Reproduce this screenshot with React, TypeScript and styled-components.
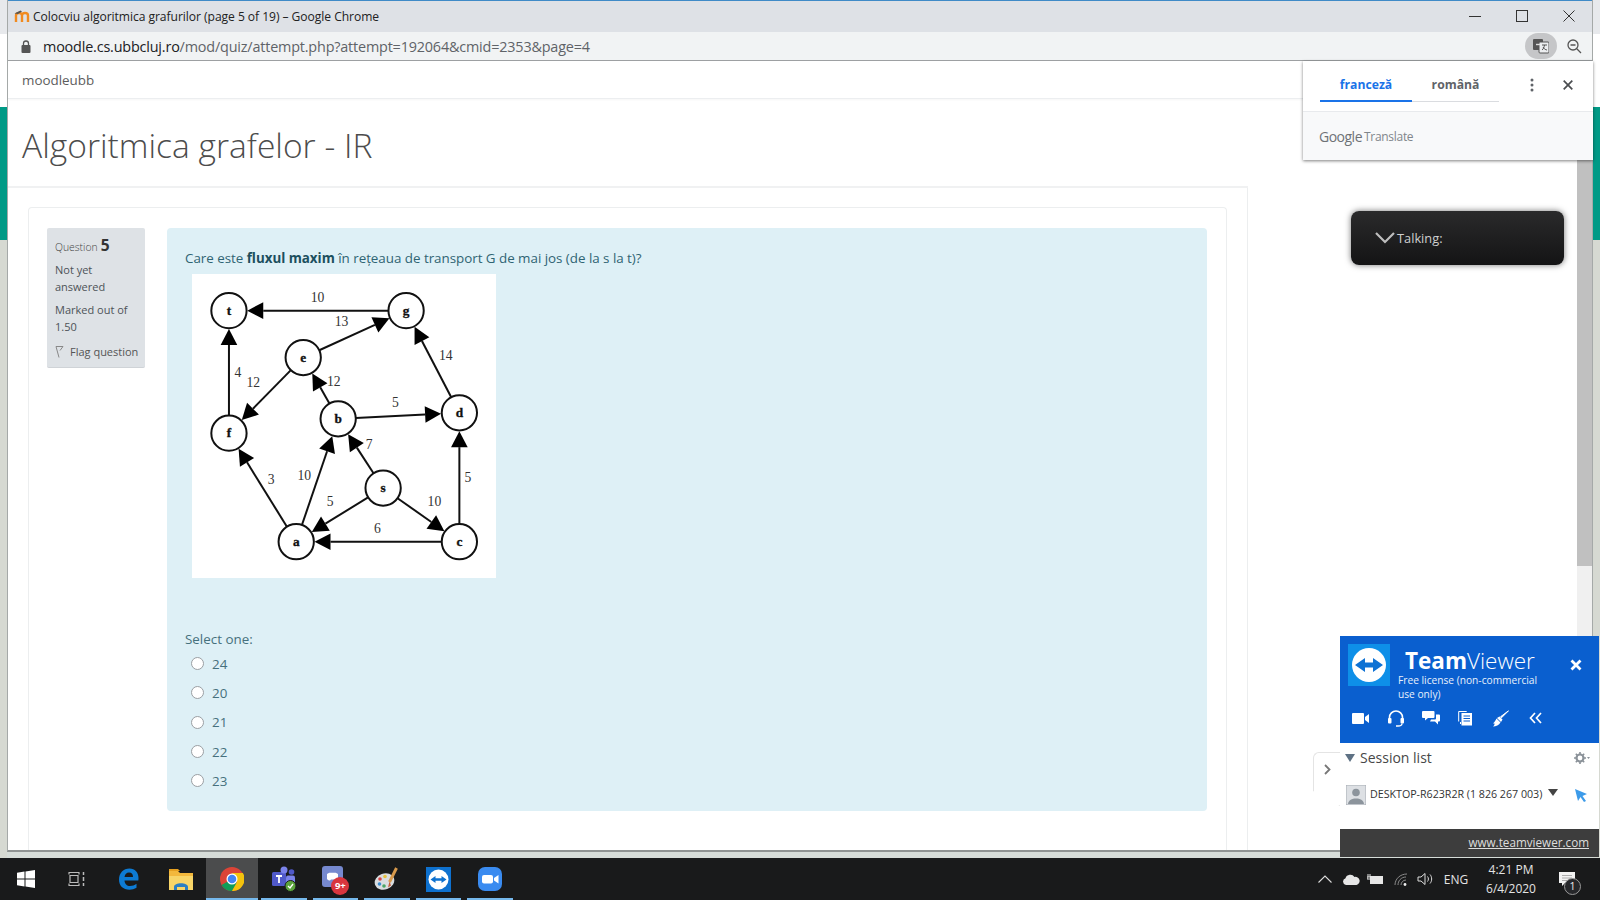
import React from "react";
import styled, { createGlobalStyle } from "styled-components";

const Global = createGlobalStyle`
  html, body { margin: 0; padding: 0; background: #fff; overflow: hidden; }
  * { box-sizing: border-box; }
`;

const UI = `"Open Sans", "Noto Sans", "Liberation Sans", sans-serif`;

const Desktop = styled.div`
  position: relative;
  width: 1600px;
  height: 900px;
  overflow: hidden;
  display: flex;
  flex-direction: column;
  font-family: ${UI};
`;
const DeskArea = styled.div`
  flex: 1;
  min-height: 0;
  display: flex;
  background: #d6dcd8;
`;
const SideStrip = styled.div`
  width: 7px;
  display: flex;
  flex-direction: column;
`;
const Band = styled.div<{ $h?: number; $c: string }>`
  flex: ${(p) => (p.$h ? `0 0 ${p.$h}px` : "1")};
  background: ${(p) => p.$c};
`;
const ChromeWindow = styled.div`
  flex: 1;
  min-width: 0;
  margin-bottom: 6px;
  display: flex;
  flex-direction: column;
  border-left: 1px solid #a5a9a8;
  border-right: 1px solid #a5a9a8;
  border-bottom: 2px solid #8f9392;
  background: #fff;
`;
const TitleBar = styled.div`
  height: 32px;
  flex: none;
  display: flex;
  align-items: center;
  background: #dee1e6;
  border-top: 1px solid #3f8ac7;
  padding: 0 0 1px 6px;
  color: #222;
  font-size: 12.1px;
`;
const Favicon = styled.svg`
  width: 16px;
  height: 16px;
  margin-right: 3px;
`;
const TitleText = styled.span`
  flex: 1;
  letter-spacing: -0.05px;
`;
const WinButton = styled.div`
  width: 47px;
  height: 29px;
  display: flex;
  align-items: center;
  justify-content: center;
`;
const AddressBar = styled.div`
  height: 29px;
  flex: none;
  display: flex;
  align-items: center;
  background: #f1f3f4;
  border-bottom: 1px solid #9da0a2;
  padding-left: 13px;
  font-size: 14.4px;
  font-family: "Open Sans", sans-serif;
  letter-spacing: -0.18px;
`;
const Host = styled.span`
  color: #202124;
  margin-left: 12px;
`;
const UrlPath = styled.span`
  color: #5f6368;
  flex: 1;
`;
const TranslateBtn = styled.div`
  width: 32px;
  height: 26px;
  border-radius: 13px;
  background: #c5c6c8;
  display: flex;
  align-items: center;
  justify-content: center;
  margin-right: 1px;
`;
const ZoomBtn = styled.div`
  width: 32px;
  display: flex;
  justify-content: center;
  margin-right: 2px;
`;
const PageArea = styled.div`
  flex: 1;
  min-height: 0;
  display: flex;
  overflow: hidden;
`;
const PageMain = styled.div`
  flex: 1;
  min-width: 0;
  display: flex;
  flex-direction: column;
`;
const Navbar = styled.div`
  height: 38px;
  flex: none;
  display: flex;
  align-items: center;
  padding-left: 14px;
  color: #5d5d5d;
  font-size: 13.4px;
  border-bottom: 1px solid #eceef0;
  box-shadow: 0 1px 2px rgba(0, 0, 0, 0.04);
`;
const Heading = styled.h1`
  margin: 0;
  height: 89px;
  flex: none;
  display: flex;
  align-items: center;
  padding: 5px 0 0 14px;
  font-size: 33.6px;
  font-weight: 300;
  color: #4c4c4c;
  border-bottom: 2px solid #f0f1f2;
  width: 1240px;
`;
const Section = styled.div`
  flex: 1;
  min-height: 0;
  width: 1240px;
  border-right: 1px solid #eceeef;
  padding: 19px 20px 0 20px;
`;
const Card = styled.div`
  height: 100%;
  border: 1px solid #eceeef;
  border-bottom: none;
  border-radius: 4px 4px 0 0;
  padding: 20px 19px 0 18px;
  display: flex;
  align-items: flex-start;
  gap: 22px;
`;
const InfoBox = styled.div`
  width: 98px;
  height: 140px;
  flex: none;
  background: #dee2e6;
  border-radius: 2px;
  border-bottom: 1px solid #cfd3d7;
  padding: 9px 0 0 8px;
  color: #4d5358;
  font-size: 11px;
  line-height: 16.7px;
`;
const QuestionLine = styled.div`
  display: flex;
  align-items: baseline;
  gap: 3px;
  height: 18px;
  font-size: 10.4px;
  font-weight: 300;
  color: #444;
`;
const QuestionNo = styled.b`
  font-size: 15.5px;
  font-weight: 700;
  color: #333;
`;
const InfoLine = styled.div`
  margin-top: 7px;
`;
const FlagLine = styled.div`
  margin-top: 8px;
  display: flex;
  align-items: center;
  gap: 6px;
  color: #555;
`;
const Content = styled.div`
  flex: 1;
  height: 583px;
  background: #def0f6;
  border-radius: 4px;
  padding: 20px 0 0 18px;
  color: #46707d;
  font-size: 13.4px;
`;
const Prompt = styled.div`
  height: 20px;
  line-height: 20px;
  color: #2f6473;
  letter-spacing: -0.03px;
`;
const Strong = styled.b`
  color: #1c4f5e;
`;
const GraphImage = styled.svg`
  display: block;
  width: 304px;
  height: 304px;
  margin: 6px 0 0 7px;
  background: #fff;
`;
const SelectLabel = styled.div`
  margin-top: 51px;
  height: 20px;
  line-height: 20px;
`;
const Choice = styled.label`
  height: 29.3px;
  display: flex;
  align-items: center;
  padding-left: 6px;
  gap: 8px;
`;
const RadioDot = styled.span`
  width: 13px;
  height: 13px;
  border-radius: 50%;
  border: 1.5px solid #9a9fa3;
  background: #fff;
`;
const Scrollbar = styled.div`
  width: 15px;
  flex: none;
  background: #f0f0f0;
  display: flex;
  flex-direction: column;
`;
const Thumb = styled.div`
  height: 505px;
  background: #c0c0c0;
`;

/* overlays */
const Popup = styled.div`
  position: absolute;
  left: 1303px;
  top: 61px;
  width: 290px;
  height: 99px;
  background: #fff;
  box-shadow: 0 1px 3px rgba(0, 0, 0, 0.5);
  display: flex;
  flex-direction: column;
`;
const PopupTop = styled.div`
  height: 50px;
  display: flex;
  align-items: flex-start;
  padding: 0 0 0 17px;
`;
const Tab = styled.div<{ $active?: boolean; $w: number }>`
  width: ${(p) => p.$w}px;
  height: 41px;
  padding-top: 7px;
  display: flex;
  align-items: center;
  justify-content: center;
  font-size: 12.2px;
  font-weight: 700;
  color: ${(p) => (p.$active ? "#1a73e8" : "#5f6368")};
  border-bottom: ${(p) => (p.$active ? "2px solid #1a73e8" : "1px solid #dadce0")};
`;
const PopupIcon = styled.div<{ $ml: number }>`
  margin-left: ${(p) => p.$ml}px;
  height: 48px;
  display: flex;
  align-items: center;
`;
const PopupBottom = styled.div`
  flex: 1;
  display: flex;
  align-items: center;
  padding-left: 16px;
  background: #f8f9fa;
  border-top: 1px solid #e8eaed;
  color: #80868b;
  font-size: 12px;
  letter-spacing: -0.3px;
`;
const GoogleWord = styled.span`
  font-size: 14px;
  color: #6e7276;
  margin-right: 2px;
  letter-spacing: -0.5px;
`;
const Talking = styled.div`
  position: absolute;
  left: 1351px;
  top: 211px;
  width: 213px;
  height: 54px;
  border-radius: 8px;
  background: linear-gradient(#2a2a2b, #141415);
  box-shadow: 0 0 6px rgba(0, 0, 0, 0.55);
  display: flex;
  align-items: center;
  padding-left: 24px;
  gap: 2px;
  color: #cfcfcf;
  font-size: 12.8px;
`;
const TvPanel = styled.div`
  position: absolute;
  left: 1340px;
  top: 636px;
  width: 259px;
  height: 221px;
  background: #fff;
  display: flex;
  flex-direction: column;
`;
const TvHead = styled.div`
  height: 107px;
  flex: none;
  background: #0a5fcf;
  color: #fff;
  padding: 8px 0 0 8px;
  display: flex;
  flex-direction: column;
`;
const TvTopRow = styled.div`
  display: flex;
  align-items: flex-start;
  height: 59px;
`;
const TvBrand = styled.div`
  width: 167px;
  margin-left: 8px;
  flex: none;
`;
const TvName = styled.div`
  font-size: 22.5px;
  line-height: 26px;
  padding-left: 7px;
  font-weight: 300;
  margin-top: 4px;
`;
const TvNameBold = styled.b`
  font-weight: 700;
`;
const TvLicense = styled.div`
  font-size: 10.2px;
  line-height: 14px;
  margin-top: -1px;
  color: #e8f0fb;
`;
const TvClose = styled.div`
  margin: 15px 0 0 5px;
  display: flex;
`;
const TvTools = styled.div`
  display: flex;
  align-items: center;
  margin-left: -5px;
  height: 30px;
`;
const TvTool = styled.div`
  width: 35px;
  display: flex;
  justify-content: center;
`;
const SessionHead = styled.div`
  height: 29px;
  flex: none;
  display: flex;
  align-items: center;
  padding: 0 9px 0 5px;
  color: #474747;
  font-size: 14px;
  gap: 5px;
`;
const SessionTitle = styled.span`
  flex: 1;
`;
const SessionRow = styled.div`
  flex: 1;
  display: flex;
  align-items: flex-start;
  padding: 13px 0 0 6px;
  color: #333;
  font-size: 10.7px;
  letter-spacing: -0.02px;
`;
const SessionText = styled.span`
  margin: 2px 0 0 4px;
  width: 178px;
  white-space: nowrap;
`;
const Avatar = styled.svg`
  width: 20px;
  height: 20px;
  flex: none;
`;
const RowMark = styled.div<{ $ml: number }>`
  margin: 4px 0 0 ${(p) => p.$ml}px;
`;
const TvFooter = styled.div`
  height: 28px;
  flex: none;
  background: #3d3d3d;
  color: #ddd;
  display: flex;
  align-items: center;
  justify-content: flex-end;
  padding: 0 10px 2px 0;
  font-size: 11.7px;
  text-decoration: underline;
`;
const SideTab = styled.div`
  position: absolute;
  left: 1313px;
  top: 752px;
  width: 27px;
  height: 54px;
  background: #fff;
  border: 1px solid #e4e4e4;
  border-right: none;
  border-radius: 6px 0 0 0;
  clip-path: polygon(0 0, 100% 0, 100% 100%, 0 72%);
  display: flex;
  align-items: flex-start;
  justify-content: center;
  padding-top: 11px;
`;

/* taskbar */
const Taskbar = styled.div`
  height: 42px;
  flex: none;
  background: #191a1b;
  display: flex;
  align-items: stretch;
`;
const TaskItem = styled.div<{ $open?: boolean; $active?: boolean }>`
  position: relative;
  width: 51.6px;
  display: flex;
  align-items: center;
  justify-content: center;
  background: ${(p) => (p.$active ? "#4b4c4d" : "transparent")};
  &::after {
    content: "";
    display: ${(p) => (p.$open ? "block" : "none")};
    position: absolute;
    left: ${(p) => (p.$active ? 0 : 3)}px;
    right: ${(p) => (p.$active ? 0 : 3)}px;
    bottom: 0;
    height: 2px;
    background: #76b9ed;
  }
`;
const Spacer = styled.div`
  flex: 1;
`;
const Tray = styled.div`
  display: flex;
  align-items: center;
  color: #e4e4e4;
  padding-right: 13px;
`;
const TrayIcon = styled.div<{ $w: number }>`
  width: ${(p) => p.$w}px;
  display: flex;
  justify-content: center;
`;
const TrayText = styled.div`
  font-size: 12px;
  width: 36px;
  margin-left: 2px;
  text-align: center;
`;
const Clock = styled.div`
  width: 72px;
  text-align: center;
  font-size: 12px;
  line-height: 19px;
  margin-left: 1px;
`;
const Notify = styled.div`
  position: relative;
  width: 40px;
  height: 42px;
  display: flex;
  align-items: center;
  justify-content: center;
`;
const NotifyCount = styled.span`
  position: absolute;
  left: 17px;
  top: 20px;
  width: 17px;
  height: 17px;
  border-radius: 50%;
  border: 1px solid #999;
  background: #26272a;
  color: #eee;
  font-size: 10.5px;
  line-height: 15px;
  text-align: center;
`;
const BadgeWrap = styled.div`
  position: relative;
  width: 26px;
  height: 26px;
`;
const NineBadge = styled.span`
  position: absolute;
  left: 9px;
  top: 11px;
  width: 18px;
  height: 18px;
  border-radius: 50%;
  background: #d9363e;
  color: #fff;
  font-size: 9.5px;
  font-weight: 700;
  line-height: 18px;
  text-align: center;
`;

/* data */
type P = { x: number; y: number };
const nodes: Record<string, P> = {
  t: { x: 597, y: 272 },
  g: { x: 1129, y: 272 },
  e: { x: 820, y: 413 },
  f: { x: 597, y: 640 },
  b: { x: 925, y: 597 },
  d: { x: 1289, y: 579 },
  s: { x: 1060, y: 805 },
  a: { x: 799, y: 966 },
  c: { x: 1289, y: 966 },
};
const edges = ["gt", "eg", "ef", "ft", "be", "bd", "dg", "af", "ab", "sb", "sa", "sc", "ca", "cd"];
const weights: [string, number, number][] = [
  ["10", 863, 233], ["13", 935, 303], ["14", 1248, 405], ["4", 624, 458], ["12", 670, 487],
  ["12", 912, 484], ["5", 1097, 548], ["7", 1018, 675], ["3", 724, 778], ["10", 823, 768],
  ["5", 901, 844], ["10", 1214, 845], ["5", 1315, 773], ["6", 1043, 925],
];
const R = 53;

function Edge({ id }: { id: string }) {
  const a = nodes[id[0]];
  const b = nodes[id[1]];
  const dx = b.x - a.x;
  const dy = b.y - a.y;
  const len = Math.hypot(dx, dy);
  const ux = dx / len;
  const uy = dy / len;
  const tip = { x: b.x - ux * (R + 2), y: b.y - uy * (R + 2) };
  const base = { x: tip.x - ux * 48, y: tip.y - uy * 48 };
  const w = 25;
  const pts = `${tip.x},${tip.y} ${base.x - uy * w},${base.y + ux * w} ${base.x + uy * w},${base.y - ux * w}`;
  return (
    <g>
      <line x1={a.x + ux * R} y1={a.y + uy * R} x2={base.x} y2={base.y} stroke="#111" strokeWidth={6} />
      <polygon points={pts} fill="#000" />
    </g>
  );
}

function Graph() {
  return (
    <GraphImage viewBox="487 162 911 913">
      {edges.map((e) => (
        <Edge key={e} id={e} />
      ))}
      {Object.entries(nodes).map(([k, n]) => (
        <g key={k}>
          <circle cx={n.x} cy={n.y} r={R} fill="#fff" stroke="#111" strokeWidth={6} />
          <text x={n.x} y={n.y + 12} textAnchor="middle" fontFamily="'Liberation Serif', serif" fontWeight={700} fontSize={40} stroke="#111" strokeWidth={1} fill="#111">
            {k}
          </text>
        </g>
      ))}
      {weights.map(([t, x, y], i) => (
        <text key={i} x={x} y={y + 14} textAnchor="middle" fontFamily="'Liberation Serif', serif" fontSize={41} fill="#333">
          {t}
        </text>
      ))}
    </GraphImage>
  );
}

const S = ({ w = 20, h = 20, vb, children }: { w?: number; h?: number; vb?: string; children: React.ReactNode }) => (
  <svg width={w} height={h} viewBox={vb ?? `0 0 ${w} ${h}`} style={{ display: "block" }}>
    {children}
  </svg>
);

const choices = ["24", "20", "21", "22", "23"];

export default function App() {
  return (
    <Desktop>
      <Global />
      <DeskArea>
        <SideStrip>
          <Band $h={34} $c="#e7e9ec" />
          <Band $h={73} $c="#fff" />
          <Band $h={133} $c="#009a86" />
          <Band $c="#d6d9d2" />
        </SideStrip>
        <ChromeWindow>
          <TitleBar>
            <Favicon viewBox="0 0 16 16">
              <path d="M2 14V7.5C2 5.5 3.5 5 5 5s3 .5 3 2.500V14M8 7.500C8 5.500 9.500 5 11 5s3 .5 3 2.500V14" fill="none" stroke="#f18a1f" strokeWidth="2.4" />
              <path d="M0.500 5.500L6.500 2.500 8 3.500 4 6z" fill="#555" />
            </Favicon>
            <TitleText>Colocviu algoritmica grafurilor (page 5 of 19) – Google Chrome</TitleText>
            <WinButton>
              <S w={12} h={12}><path d="M0 6.500h12" stroke="#333" /></S>
            </WinButton>
            <WinButton>
              <S w={12} h={12}><rect x=".5" y=".5" width="11" height="11" fill="none" stroke="#333" /></S>
            </WinButton>
            <WinButton>
              <S w={12} h={12}><path d="M.5.500l11 11M11.500.500l-11 11" stroke="#333" /></S>
            </WinButton>
          </TitleBar>
          <AddressBar>
            <S w={10} h={13}>
              <rect x="0.500" y="5" width="9" height="8" rx="1" fill="#555" />
              <path d="M2.500 5.500V3.500a2.500 2.500 0 0 1 5 0v2" fill="none" stroke="#555" strokeWidth="1.300" />
            </S>
            <Host>moodle.cs.ubbcluj.ro</Host>
            <UrlPath>/mod/quiz/attempt.php?attempt=192064&amp;cmid=2353&amp;page=4</UrlPath>
            <TranslateBtn>
              <S w={16} h={16}>
                <rect x="0" y="1" width="10" height="11" rx="1" fill="#555" />
                <rect x="6" y="4" width="10" height="11" rx="1" fill="#eceef0" stroke="#555" />
                <path d="M3 6.500h4" stroke="#ddd" strokeWidth="1.400" />
                <path d="M9 7h5M11.500 7c-.3 2-1 4-2.500 5M10 9c1 1.500 2.500 3 4 3" stroke="#555" fill="none" />
              </S>
            </TranslateBtn>
            <ZoomBtn>
              <S w={15} h={15}>
                <circle cx="6" cy="6" r="5" fill="none" stroke="#555" strokeWidth="1.300" />
                <path d="M3.500 6h5M9.800 9.800L14 14" stroke="#555" strokeWidth="1.300" />
              </S>
            </ZoomBtn>
          </AddressBar>
          <PageArea>
            <PageMain>
              <Navbar>moodleubb</Navbar>
              <Heading>Algoritmica grafelor - IR</Heading>
              <Section>
                <Card>
                  <InfoBox>
                    <QuestionLine>
                      Question <QuestionNo>5</QuestionNo>
                    </QuestionLine>
                    <InfoLine>Not yet<br />answered</InfoLine>
                    <InfoLine>Marked out of<br />1.50</InfoLine>
                    <FlagLine>
                      <S w={9} h={12}>
                        <path d="M1 .500h7L5 4.500M1 .500l3 11" fill="none" stroke="#888" strokeWidth="1" />
                      </S>
                      Flag question
                    </FlagLine>
                  </InfoBox>
                  <Content>
                    <Prompt>
                      Care este <Strong>fluxul maxim</Strong> în rețeaua de transport G de mai jos (de la s la t)?
                    </Prompt>
                    <Graph />
                    <SelectLabel>Select one:</SelectLabel>
                    {choices.map((c) => (
                      <Choice key={c}>
                        <RadioDot />
                        {c}
                      </Choice>
                    ))}
                  </Content>
                </Card>
              </Section>
            </PageMain>
            <Scrollbar>
              <Thumb />
            </Scrollbar>
          </PageArea>
        </ChromeWindow>
        <SideStrip>
          <Band $h={34} $c="#e7e9ec" />
          <Band $h={73} $c="#fff" />
          <Band $h={133} $c="#009a86" />
          <Band $c="#d6d9d2" />
        </SideStrip>
      </DeskArea>

      <Taskbar>
        <TaskItem>
          <S w={18} h={18}>
            <path d="M0 2.700L7.500 1.600V8.500H0zM8.500 1.500L18 0V8.500H8.500zM0 9.500H7.500V16.400L0 15.300zM8.500 9.500H18V18L8.500 16.500z" fill="#fff" />
          </S>
        </TaskItem>
        <TaskItem>
          <S w={18} h={16}>
            <path d="M.5 1.500h11M.5 14.500h11M2 4.500h8v7H2z M1 1.500v2M11 1.500v2M1 12.500v2M11 12.500v2" fill="none" stroke="#bbb" strokeWidth="1.200" />
            <path d="M15.500 1v3M15.500 6v4M15.500 12v3" stroke="#bbb" strokeWidth="1.500" />
          </S>
        </TaskItem>
        <TaskItem>
          <S w={21} h={22}>
            <path d="M19 12.500H6.500C6.700 16 9 18 12 18c2.500 0 4.500-.8 6.500-2.200v4C16.500 21 14 21.800 11.500 21.800 5 21.800 1 17.500 1 11.500 1 5 5.500.5 11.500.5 17 .5 20.500 4.500 20.500 10c0 1 0 1.700-.2 2.500zM15 9C15 6 13.800 4.500 11 4.500 8.500 4.500 7 6 6.500 9z" fill="#0d7bd4" />
          </S>
        </TaskItem>
        <TaskItem>
          <S w={24} h={21}>
            <path d="M0 2h9l2 2h13v17H0z" fill="#f3b83c" />
            <path d="M0 0h9l2 2H0z" fill="#e6a020" />
            <rect x="0" y="7" width="24" height="14" fill="#f8d568" />
            <path d="M5 18c0-5 14-5 14 0v3h-3v-3H8v3H5z" fill="#2b7fc3" />
          </S>
        </TaskItem>
        <TaskItem $open $active>
          <S w={24} h={24}>
            <circle cx="12" cy="12" r="12" fill="#db4437" />
            <path d="M12 12L1.600 18A12 12 0 0 0 12 24l5-8z" fill="#0f9d58" />
            <path d="M12 6h10.900A12 12 0 0 1 12 24l5-9z" fill="#f4c20d" />
            <circle cx="12" cy="12" r="5.500" fill="#fff" />
            <circle cx="12" cy="12" r="4.300" fill="#4285f4" />
          </S>
        </TaskItem>
        <TaskItem $open>
          <S w={26} h={26}>
            <rect x="1" y="6" width="14" height="14" rx="1.500" fill="#5059c9" />
            <circle cx="13" cy="4" r="3.500" fill="#7b83eb" />
            <circle cx="20.500" cy="6" r="2.800" fill="#5059c9" />
            <rect x="15" y="9.500" width="9" height="9" rx="2" fill="#7b83eb" />
            <path d="M5 10h6M8 10v7" stroke="#fff" strokeWidth="1.800" />
            <circle cx="19.500" cy="20" r="5.500" fill="#5ba33c" stroke="#191a1b" />
            <path d="M17 20l2 2 3-4" fill="none" stroke="#fff" strokeWidth="1.300" />
          </S>
        </TaskItem>
        <TaskItem $open>
          <BadgeWrap>
            <S w={22} h={22}>
              <rect x="0" y="0" width="21" height="21" rx="3" fill="#7689cf" />
              <path d="M5 13V8c2-1.500 3-1.500 4-1.200h3c1-.3 2-.3 4 1.200v5c-1 1.200-2 1.500-3 1.500l-1-1H9l-1 1c-1 0-2-.3-3-1.500z" fill="#fff" />
            </S>
            <NineBadge>9+</NineBadge>
          </BadgeWrap>
        </TaskItem>
        <TaskItem $open>
          <S w={25} h={25}>
            <ellipse cx="10.500" cy="14.500" rx="10" ry="8" fill="#d9dde0" transform="rotate(-20 10.500 14.500)" />
            <circle cx="6" cy="12" r="1.800" fill="#d64646" />
            <circle cx="11" cy="9.500" r="1.800" fill="#e5c13d" />
            <circle cx="5.500" cy="17" r="1.800" fill="#3b8dd0" />
            <circle cx="10" cy="19" r="1.800" fill="#4aa564" />
            <path d="M22.500 1l-7 14" stroke="#d89a4c" strokeWidth="3" />
            <path d="M15.500 14.500l-1.500 6 3-2z" fill="#c25a3a" />
          </S>
        </TaskItem>
        <TaskItem $open>
          <S w={25} h={25}>
            <rect width="25" height="25" fill="#0e71cf" />
            <circle cx="12.500" cy="12.500" r="10" fill="#fff" />
            <path d="M4.500 12.500l5-3.600v2.300h6V8.900l5 3.600-5 3.600v-2.300h-6v2.300z" fill="#0e71cf" />
          </S>
        </TaskItem>
        <TaskItem $open>
          <S w={24} h={24}>
            <rect width="24" height="24" rx="7" fill="#3a8bf0" />
            <rect x="4" y="8" width="11" height="8.500" rx="2" fill="#fff" />
            <path d="M16 11l4.500-3v8.500L16 13.500z" fill="#fff" />
          </S>
        </TaskItem>
        <Spacer />
        <Tray>
          <TrayIcon $w={26}>
            <S w={14} h={8}><path d="M.5 7.500L7 1l6.500 6.500" fill="none" stroke="#ddd" strokeWidth="1.100" /></S>
          </TrayIcon>
          <TrayIcon $w={25}>
            <S w={18} h={11}>
              <path d="M4 11A3.500 3.500 0 0 1 3.500 4.200 5 5 0 0 1 12.500 3 4 4 0 0 1 14.500 11z" fill="#e6e6e6" />
            </S>
          </TrayIcon>
          <TrayIcon $w={25}>
            <S w={17} h={11}>
              <rect x="3" y="2" width="13" height="8" fill="#e6e6e6" />
              <path d="M1 0v3M3 0v3M0 3h4v2H0z" stroke="#e6e6e6" fill="none" />
            </S>
          </TrayIcon>
          <TrayIcon $w={26}>
            <S w={15} h={13}>
              <path d="M1 12C1 6 6 1 13 1M4 12c0-4 3-8 8-8M7 12c0-2.500 2-5 5-5" fill="none" stroke="#8a8a8a" />
              <circle cx="11" cy="11.500" r="1.400" fill="#eee" />
            </S>
          </TrayIcon>
          <TrayIcon $w={22}>
            <S w={17} h={14}>
              <path d="M1 5h3l4-3.500v11L4 9H1z" fill="none" stroke="#ddd" />
              <path d="M10.500 4.500c1.200 1.500 1.200 3.500 0 5M13 2.500c2.200 2.500 2.200 6.500 0 9" fill="none" stroke="#ddd" />
            </S>
          </TrayIcon>
          <TrayText>ENG</TrayText>
          <Clock>
            4:21 PM
            <br />
            6/4/2020
          </Clock>
          <Notify>
            <S w={17} h={15}>
              <path d="M0 0h16v11H6l-3 3v-3H0z" fill="#f2f2f2" />
              <path d="M3 3.500h10M3 6h10M3 8.500h6" stroke="#999" strokeWidth=".8" />
            </S>
            <NotifyCount>1</NotifyCount>
          </Notify>
        </Tray>
      </Taskbar>

      <Popup>
        <PopupTop>
          <Tab $active $w={92}>franceză</Tab>
          <Tab $w={87}>română</Tab>
          <PopupIcon $ml={31}>
            <S w={4} h={14}>
              <circle cx="2" cy="2" r="1.500" fill="#5f6368" />
              <circle cx="2" cy="7" r="1.500" fill="#5f6368" />
              <circle cx="2" cy="12" r="1.500" fill="#5f6368" />
            </S>
          </PopupIcon>
          <PopupIcon $ml={29}>
            <S w={10} h={10}><path d="M.7.700l8.600 8.600M9.300.700L.7 9.300" stroke="#4a4d50" strokeWidth="1.700" /></S>
          </PopupIcon>
        </PopupTop>
        <PopupBottom>
          <GoogleWord>Google</GoogleWord>Translate
        </PopupBottom>
      </Popup>

      <Talking>
        <S w={20} h={12}><path d="M1 1l9 9 9-9" fill="none" stroke="#bdbdbd" strokeWidth="2.200" /></S>
        Talking:
      </Talking>

      <SideTab>
        <S w={7} h={11}><path d="M1 1l4.500 4.500L1 10" fill="none" stroke="#777" strokeWidth="1.800" /></S>
      </SideTab>

      <TvPanel>
        <TvHead>
          <TvTopRow>
            <S w={42} h={42}>
              <rect width="42" height="42" fill="#0e8fe8" />
              <circle cx="21" cy="21" r="17" fill="#fff" />
              <path d="M7 21l10-7v4.500h8V14l10 7-10 7v-4.500h-8V28z" fill="#0e72d4" />
            </S>
            <TvBrand>
              <TvName><TvNameBold>Team</TvNameBold>Viewer</TvName>
              <TvLicense>Free license (non-commercial<br />use only)</TvLicense>
            </TvBrand>
            <TvClose>
              <S w={12} h={12}><path d="M1.500 1.500l9 9M10.500 1.500l-9 9" stroke="#fff" strokeWidth="2.800" /></S>
            </TvClose>
          </TvTopRow>
          <TvTools>
            <TvTool>
              <S w={18} h={13}><rect x="0" y="1" width="12" height="11" rx="1" fill="#fff" /><path d="M13 5l4-3v9l-4-3z" fill="#fff" /></S>
            </TvTool>
            <TvTool>
              <S w={18} h={18}>
                <path d="M2.500 10V8.500a6.500 6.500 0 0 1 13 0V10" fill="none" stroke="#fff" strokeWidth="1.600" />
                <rect x="1" y="9" width="3.500" height="5.500" rx="1" fill="#fff" />
                <rect x="13.500" y="9" width="3.500" height="5.500" rx="1" fill="#fff" />
                <path d="M15 14.500c0 1.500-2 2.500-4 2.500H9" fill="none" stroke="#fff" strokeWidth="1.300" />
              </S>
            </TvTool>
            <TvTool>
              <S w={18} h={16}>
                <path d="M1 1h10.500q1 0 1 1v5q0 1-1 1H6l-3 2.500V8H1q-1 0-1-1V2q0-1 1-1z" fill="#fff" />
                <path d="M14 4.500h3q1 0 1 1v5q0 1-1 1h-1v3l-3-3H8l1-2h4q1 0 1-1z" fill="#fff" />
              </S>
            </TvTool>
            <TvTool>
              <S w={15} h={16}>
                <path d="M.7 1.500h8M.7 1.500v10M2.500 12v2" fill="none" stroke="#fff" />
                <rect x="3.500" y="3" width="10.500" height="12.500" fill="#fff" />
                <path d="M5.500 6h6.500M5.500 8.500h6.500M5.500 11h6.500" stroke="#0a5fcf" />
              </S>
            </TvTool>
            <TvTool>
              <S w={17} h={17}>
                <path d="M16.500.800L9.500 7.800l-1-1z" fill="#fff" stroke="#fff" />
                <path d="M7.500 6.500l3 3-1.500 2.500-4-4z" fill="#fff" />
                <path d="M4.500 8.500l4 4C7 15 4 16.500 1 16.500c1.200-1 1.700-2 1.500-3-.5 0-1 0-1.500-.2 1.500-.8 2.500-2.800 3.500-4.800z" fill="#fff" />
              </S>
            </TvTool>
            <TvTool>
              <S w={13} h={12}><path d="M6 1L1.500 6 6 11M12 1L7.500 6 12 11" fill="none" stroke="#fff" strokeWidth="1.700" /></S>
            </TvTool>
          </TvTools>
        </TvHead>
        <SessionHead>
          <S w={10} h={8}><path d="M0 0h10L5 8z" fill="#5e7184" /></S>
          <SessionTitle>Session list</SessionTitle>
          <S w={16} h={12}>
            <circle cx="6" cy="6" r="3.500" fill="none" stroke="#8b9299" strokeWidth="2.200" />
            <path d="M6 0v2M6 10v2M0 6h2M10 6h2M1.800 1.800l1.400 1.400M8.800 8.800l1.400 1.400M1.800 10.200l1.400-1.400M8.800 3.200l1.400-1.400" stroke="#8b9299" strokeWidth="1.600" />
            <path d="M13 5h3l-1.500 2z" fill="#8b9299" />
          </S>
        </SessionHead>
        <SessionRow>
          <Avatar viewBox="0 0 20 20">
            <rect width="20" height="20" fill="#dde0e4" stroke="#a5abb2" />
            <circle cx="10" cy="7.500" r="3.800" fill="#8c949c" />
            <path d="M2 19c.5-4 4-5.500 8-5.500s7.500 1.500 8 5.500z" fill="#8c949c" />
          </Avatar>
          <SessionText>DESKTOP-R623R2R (1 826 267 003)</SessionText>
          <RowMark $ml={0}>
            <S w={10} h={8}><path d="M0 0h10L5 7z" fill="#444" /></S>
          </RowMark>
          <RowMark $ml={17}>
            <S w={13} h={13}><path d="M0 0l12 5-4.500 2L11 12l-2 1-3.500-5L3 12z" fill="#3d9be9" /></S>
          </RowMark>
        </SessionRow>
        <TvFooter>www.teamviewer.com</TvFooter>
      </TvPanel>
    </Desktop>
  );
}
